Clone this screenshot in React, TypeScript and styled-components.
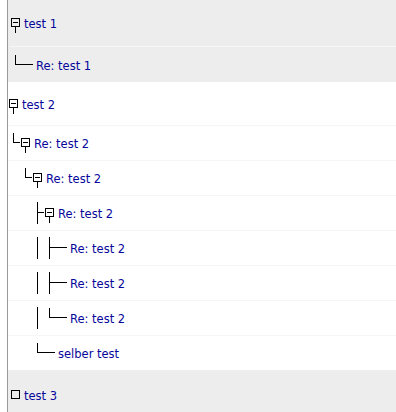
import { createGlobalStyle, styled } from "styled-components";

type Glyph = "blank" | "pipe" | "tee" | "elbow" | "teeLeaf" | "elbowLeaf" | "open" | "closed";

interface Post {
  title: string;
  glyphs: Glyph[];
}

interface ThreadData {
  shaded: boolean;
  topHeight: number;
  replyHeight: number;
  posts: Post[];
}

const threads: ThreadData[] = [
  {
    shaded: true,
    topHeight: 46,
    replyHeight: 35,
    posts: [
      { title: "test 1", glyphs: ["open"] },
      { title: "Re: test 1", glyphs: ["elbowLeaf"] },
    ],
  },
  {
    shaded: false,
    topHeight: 43,
    replyHeight: 34,
    posts: [
      { title: "test 2", glyphs: ["open"] },
      { title: "Re: test 2", glyphs: ["elbow", "open"] },
      { title: "Re: test 2", glyphs: ["blank", "elbow", "open"] },
      { title: "Re: test 2", glyphs: ["blank", "blank", "tee", "open"] },
      { title: "Re: test 2", glyphs: ["blank", "blank", "pipe", "teeLeaf"] },
      { title: "Re: test 2", glyphs: ["blank", "blank", "pipe", "teeLeaf"] },
      { title: "Re: test 2", glyphs: ["blank", "blank", "pipe", "elbowLeaf"] },
      { title: "selber test", glyphs: ["blank", "blank", "elbowLeaf"] },
    ],
  },
  {
    shaded: true,
    topHeight: 50,
    replyHeight: 34,
    posts: [{ title: "test 3", glyphs: ["closed"] }],
  },
];

// tree lines, one cell per level
function TreeGlyph({ kind }: { kind: Glyph }) {
  const leaf = kind === "teeLeaf" || kind === "elbowLeaf";
  const w = leaf ? 24 : 12;
  return (
    <svg width={w} height={22} viewBox={`0 0 ${w} 22`} shapeRendering="crispEdges">
      <g stroke="#000" strokeWidth={1} fill="none">
        {(kind === "pipe" || kind === "tee" || kind === "teeLeaf") && (
          <line x1={5.5} y1={0} x2={5.5} y2={22} />
        )}
        {(kind === "elbow" || kind === "elbowLeaf") && (
          <line x1={5.5} y1={1} x2={5.5} y2={11} />
        )}
        {(kind === "tee" || kind === "elbow") && <line x1={5} y1={10.5} x2={12} y2={10.5} />}
        {leaf && <line x1={5} y1={10.5} x2={23} y2={10.5} />}
        {(kind === "open" || kind === "closed") && (
          <rect x={1.5} y={6.5} width={8} height={8} />
        )}
        {kind === "open" && (
          <>
            <line x1={3} y1={10.5} x2={8} y2={10.5} />
            <line x1={5.5} y1={15} x2={5.5} y2={21} />
          </>
        )}
      </g>
    </svg>
  );
}

const GlobalStyle = createGlobalStyle`
  html, body {
    margin: 0;
    padding: 0;
    background: #fff;
    overflow: hidden;
  }
`;

const Board = styled.div`
  margin-left: 7px;
  min-height: 100vh;
  border-left: 1px solid #9a9a9a;
  font-family: "DejaVu Sans", Verdana, sans-serif;
`;

const Thread = styled.div<{ $shaded: boolean }>`
  background: ${(p) => (p.$shaded ? "#ededed" : "#fff")};
  padding-left: ${(p) => (p.$shaded ? 2 : 0)}px;
`;

const Row = styled.div<{ $height: number; $line: string }>`
  display: flex;
  align-items: center;
  height: ${(p) => p.$height}px;

  & + & {
    border-top: 1px solid ${(p) => p.$line};
  }

  svg {
    display: block;
    flex: none;
  }
`;

const Title = styled.a`
  margin-left: 2px;
  padding-top: 2px;
  font-size: 11.5px;
  color: #06069a;
  text-decoration: none;
  white-space: nowrap;
  cursor: pointer;
`;

export default function App() {
  return (
    <>
      <GlobalStyle />
      <Board>
        {threads.map((t, ti) => (
          <Thread key={ti} $shaded={t.shaded}>
            {t.posts.map((post, pi) => (
              <Row
                key={pi}
                $height={pi === 0 ? t.topHeight : t.replyHeight}
                $line={t.shaded ? "#f6f6f6" : "#ececec"}
              >
                {post.glyphs.map((g, gi) => (
                  <TreeGlyph key={gi} kind={g} />
                ))}
                <Title>{post.title}</Title>
              </Row>
            ))}
          </Thread>
        ))}
      </Board>
    </>
  );
}
